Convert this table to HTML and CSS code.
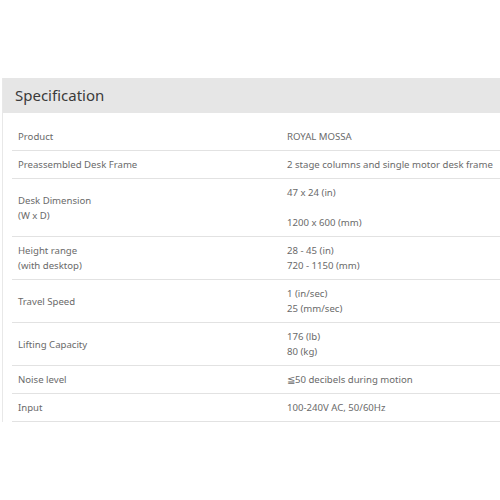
FILE: index.html
```html
<!DOCTYPE html>
<html>
<head>
<meta charset="utf-8">
<link rel="stylesheet" href="styles.css">
</head>
<body>
<section class="spec">
  <h2 class="spec-title">Specification</h2>
  <table class="spec-table">
    <tr><td class="k">Product</td><td class="v">ROYAL MOSSA</td></tr>
    <tr><td class="k">Preassembled Desk Frame</td><td class="v">2 stage columns and single motor desk frame</td></tr>
    <tr><td class="k">Desk Dimension<br>(W x D)</td><td class="v">47 x 24 (in)<br><br>1200 x 600 (mm)</td></tr>
    <tr><td class="k">Height range<br>(with desktop)</td><td class="v">28 - 45 (in)<br>720 - 1150 (mm)</td></tr>
    <tr><td class="k">Travel Speed</td><td class="v">1 (in/sec)<br>25 (mm/sec)</td></tr>
    <tr><td class="k">Lifting Capacity</td><td class="v">176 (lb)<br>80 (kg)</td></tr>
    <tr><td class="k">Noise level</td><td class="v">≦50 decibels during motion</td></tr>
    <tr><td class="k">Input</td><td class="v">100-240V AC, 50/60Hz</td></tr>
  </table>
</section>
</body>
</html>
```
FILE: styles.css
```css
html, body {
  margin: 0;
  padding: 0;
  background: #fff;
}
body {
  font-family: "Noto Sans", "Open Sans", sans-serif;
  overflow: hidden;
}
.spec {
  margin-top: 78px;
  margin-left: 2px;
  border-left: 1px solid #e8e8e8;
}
.spec-title {
  margin: 0;
  height: 35px;
  line-height: 35px;
  background: #e6e6e6;
  padding-left: 12px;
  font-size: 15px;
  font-weight: 400;
  color: #3a3a3a;
}
.spec-table {
  margin-top: 10px;
  margin-left: 9px;
  width: 489px;
  border-collapse: collapse;
  font-size: 9.6px;
  line-height: 15px;
  color: #6a6a6a;
}
.spec-table td {
  border-bottom: 1px solid #e2e2e2;
  padding: 6px 6px;
  vertical-align: middle;
  white-space: nowrap;
}
.spec-table .k {
  width: 257px;
}
```
